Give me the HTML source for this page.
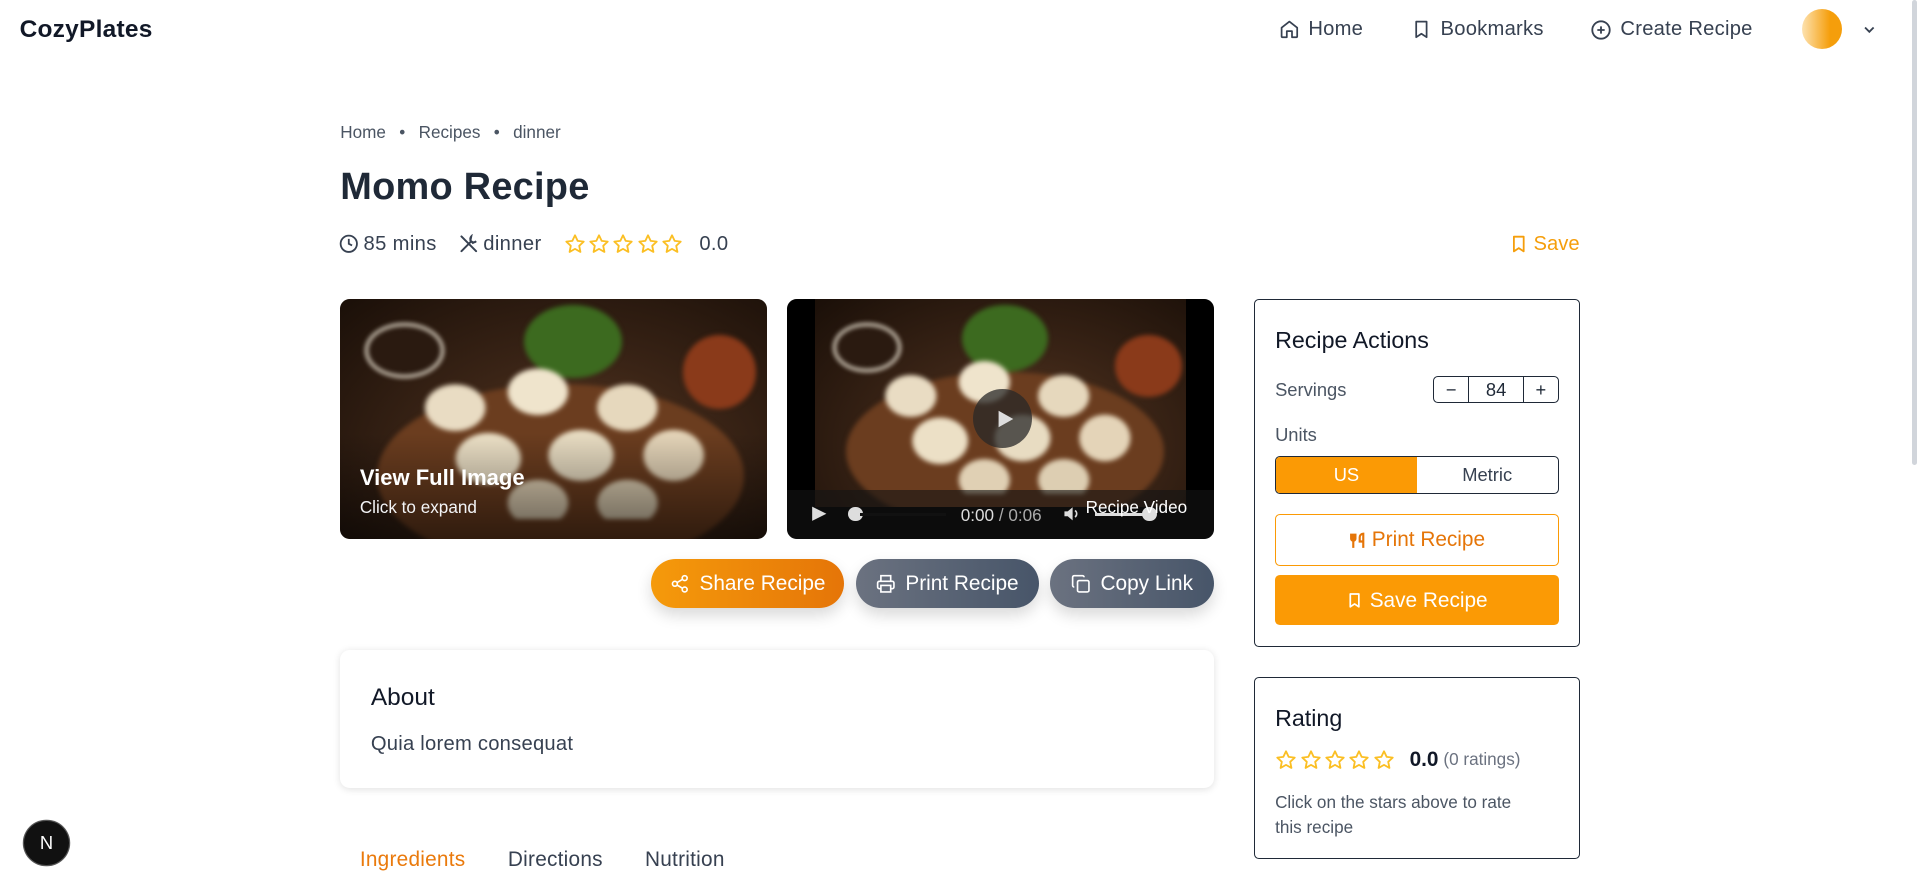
<!DOCTYPE html>
<html><head><meta charset="utf-8"><style>
html,body{margin:0;padding:0;background:#fff;overflow:hidden}
body{width:1919px;height:874px}
#z{zoom:1.2239;width:1568px;height:714px;position:relative;font-family:"Liberation Sans",sans-serif;color:#1f2937}
.a{position:absolute;white-space:nowrap}
svg{display:block}
.nav{font-size:16.5px;color:#374151;display:flex;align-items:center;gap:7px;letter-spacing:.2px}
.btn{position:absolute;top:457px;height:40px;border-radius:20px;color:#fff;font-size:17px;display:flex;align-items:center;justify-content:center;gap:8px;box-shadow:0 6px 12px rgba(0,0,0,.15)}
.card{position:absolute;border:1px solid #1f2937;border-radius:4px;background:#fff}
.star{display:inline-block}
.blur{filter:blur(2px)}
</style></head><body><div id="z">
<div class="a" style="left:16px;top:13px;font-size:20px;font-weight:bold;color:#111827;letter-spacing:.2px">CozyPlates</div>
<div class="a nav" style="left:1045px;top:15px"><svg width="17" height="17" viewBox="0 0 24 24" fill="none" stroke="#374151" stroke-width="2" stroke-linejoin="round"><path d="M3 10l9-7 9 7v10a1 1 0 0 1-1 1h-5v-7h-6v7H4a1 1 0 0 1-1-1z"/></svg>Home</div>
<div class="a nav" style="left:1153px;top:15px"><svg width="17" height="17" viewBox="0 0 24 24" fill="none" stroke="#374151" stroke-width="2" stroke-linejoin="round"><path d="M6 3h12v18l-6-4-6 4z"/></svg>Bookmarks</div>
<div class="a nav" style="left:1299px;top:15px"><svg width="18" height="18" viewBox="0 0 24 24" fill="none" stroke="#374151" stroke-width="2"><circle cx="12" cy="12" r="9.5"/><path d="M12 8v8M8 12h8"/></svg>Create Recipe</div>
<div class="a" style="left:1472px;top:7px;width:33px;height:33px;border-radius:50%;background:linear-gradient(90deg,#fde2b0,#f59e0b 70%)"></div>
<svg class="a" style="left:1521px;top:18px" width="12" height="12" viewBox="0 0 24 24" fill="none" stroke="#374151" stroke-width="3"><path d="M5 9l7 7 7-7"/></svg>
<div class="a" style="left:1562px;top:0;width:4px;height:380px;background:#d1d5db;border-radius:2px"></div>

<div class="a" style="left:278px;top:100px;font-size:14px;color:#4b5563">Home <span style="margin:0 7px">•</span> Recipes <span style="margin:0 7px">•</span> dinner</div>
<div class="a" style="left:278px;top:136px;font-size:31px;font-weight:bold;color:#1f2937;letter-spacing:.2px">Momo Recipe</div>
<div class="a" style="left:277px;top:190px;font-size:16.5px;color:#374151;display:flex;align-items:center;letter-spacing:.3px">
<svg width="16" height="16" viewBox="0 0 24 24" fill="none" stroke="#374151" stroke-width="2.2"><circle cx="12" cy="12" r="10"/><path d="M12 6v6l4 2"/></svg><span style="margin-left:4px">85 mins</span>
<svg style="margin-left:18px" width="16" height="16" viewBox="0 0 24 24" fill="none" stroke="#374151" stroke-width="2.4" stroke-linecap="round"><path d="M3 3l18 18M15 9l-12 12M15 3a4 4 0 0 0 6 6l-4 2-3-3z"/></svg><span style="margin-left:4px">dinner</span>
<span style="margin-left:18px;display:flex;gap:2px" id="st1"></span><span style="margin-left:13px">0.0</span></div>
<div class="a" style="left:1233px;top:190px;font-size:16.5px;color:#f59e0b;display:flex;align-items:center;gap:4px"><svg width="16" height="18" viewBox="0 0 24 24" fill="none" stroke="#f59e0b" stroke-width="2.2" stroke-linejoin="round"><path d="M6 3h12v18l-6-4-6 4z"/></svg>Save</div>

<div class="a" style="left:278px;top:244px;width:349px;height:196px;border-radius:8px;overflow:hidden;background:radial-gradient(ellipse at 55% 70%,#5a3a22 0,#3a2416 45%,#1a0f08 100%)">
<div class="blur">
<div class="a" style="left:30px;top:70px;width:300px;height:150px;border-radius:50%;background:#6b3d1f"></div>
<div class="a" style="left:150px;top:5px;width:80px;height:60px;border-radius:50%;background:#3c6a1f"></div>
<div class="a" style="left:20px;top:20px;width:60px;height:40px;border-radius:50%;background:#2a1a10;border:3px solid #e8e0d0"></div>
<div class="a" style="left:280px;top:30px;width:60px;height:60px;border-radius:50%;background:#8a3a1a"></div>
<div class="a" style="left:40px;top:50px;width:270px;height:130px;background:radial-gradient(ellipse 26px 20px at 20% 30%,#e9dcc3 90%,transparent),radial-gradient(ellipse 26px 20px at 45% 20%,#efe4cc 90%,transparent),radial-gradient(ellipse 26px 20px at 72% 30%,#e6d8bd 90%,transparent),radial-gradient(ellipse 28px 22px at 30% 62%,#ece0c6 90%,transparent),radial-gradient(ellipse 28px 22px at 58% 60%,#e8dcc2 90%,transparent),radial-gradient(ellipse 26px 22px at 86% 60%,#e4d4b8 90%,transparent),radial-gradient(ellipse 26px 20px at 45% 90%,#e0d0b4 90%,transparent),radial-gradient(ellipse 26px 20px at 72% 90%,#ddceb2 90%,transparent)"></div>
</div>
<div class="a" style="left:0;top:110px;width:349px;height:86px;background:linear-gradient(transparent,rgba(0,0,0,.55))"></div>
<div class="a" style="left:16px;top:136px;color:#fff;font-size:18px;font-weight:bold">View Full Image</div>
<div class="a" style="left:16px;top:162px;color:#f3f4f6;font-size:14px">Click to expand</div>
</div>

<div class="a" style="left:643px;top:244px;width:349px;height:196px;border-radius:8px;overflow:hidden;background:#000">
<div class="a" style="left:23px;top:0;width:303px;height:170px;overflow:hidden;background:radial-gradient(ellipse at 55% 70%,#5a3a22 0,#3a2416 45%,#1a0f08 100%)">
<div class="blur">
<div class="a" style="left:25px;top:60px;width:260px;height:130px;border-radius:50%;background:#6b3d1f"></div>
<div class="a" style="left:120px;top:5px;width:70px;height:55px;border-radius:50%;background:#3c6a1f"></div>
<div class="a" style="left:15px;top:20px;width:50px;height:35px;border-radius:50%;background:#2a1a10;border:3px solid #e8e0d0"></div>
<div class="a" style="left:245px;top:30px;width:55px;height:50px;border-radius:50%;background:#8a3a1a"></div>
<div class="a" style="left:30px;top:45px;width:240px;height:115px;background:radial-gradient(ellipse 22px 18px at 20% 30%,#e9dcc3 90%,transparent),radial-gradient(ellipse 22px 18px at 45% 20%,#efe4cc 90%,transparent),radial-gradient(ellipse 22px 18px at 72% 30%,#e6d8bd 90%,transparent),radial-gradient(ellipse 24px 20px at 30% 62%,#ece0c6 90%,transparent),radial-gradient(ellipse 24px 20px at 58% 60%,#e8dcc2 90%,transparent),radial-gradient(ellipse 22px 20px at 86% 60%,#e4d4b8 90%,transparent),radial-gradient(ellipse 22px 18px at 45% 90%,#e0d0b4 90%,transparent),radial-gradient(ellipse 22px 18px at 72% 90%,#ddceb2 90%,transparent)"></div>
</div></div>
<div class="a" style="left:152px;top:74px;width:48px;height:48px;border-radius:50%;background:rgba(40,40,40,.75)"></div>
<svg class="a" style="left:169px;top:89px" width="18" height="18" viewBox="0 0 24 24"><path d="M5 3l16 9-16 9z" fill="#ddd"/></svg>
<div class="a" style="left:0;top:156px;width:349px;height:40px;background:rgba(20,20,20,.6)"></div>
<svg class="a" style="left:19px;top:168px" width="14" height="16" viewBox="0 0 24 24"><path d="M3 2l20 10-20 10z" fill="#ddd"/></svg>
<div class="a" style="left:50px;top:170px;width:12px;height:12px;border-radius:50%;background:#ddd"></div>
<div class="a" style="left:60px;top:175px;width:70px;height:3px;background:#111"></div>
<div class="a" style="left:142px;top:169px;font-size:14px;color:#ddd">0:00 <span style="color:#aaa">/ 0:06</span></div>
<svg class="a" style="left:225px;top:168px" width="16" height="16" viewBox="0 0 24 24"><path d="M3 9h4l6-5v16l-6-5H3z" fill="#ddd"/><path d="M16 8a5 5 0 0 1 0 8" stroke="#ddd" stroke-width="2" fill="none"/></svg>
<div class="a" style="left:252px;top:175px;width:45px;height:3px;background:#ddd"></div>
<div class="a" style="left:290px;top:170px;width:12px;height:12px;border-radius:50%;background:#ddd"></div>
<div class="a" style="left:244px;top:162px;font-size:14px;color:#fff">Recipe Video</div>
</div>

<div class="btn" style="left:532px;width:158px;background:linear-gradient(90deg,#f59a0b,#e57508)"><svg width="16" height="16" viewBox="0 0 24 24" fill="none" stroke="#fff" stroke-width="2"><circle cx="18" cy="5" r="3"/><circle cx="6" cy="12" r="3"/><circle cx="18" cy="19" r="3"/><path d="M8.6 13.5l6.8 4M15.4 6.5l-6.8 4"/></svg>Share Recipe</div>
<div class="btn" style="left:699px;width:150px;background:linear-gradient(90deg,#6b7280,#475569)"><svg width="16" height="16" viewBox="0 0 24 24" fill="none" stroke="#fff" stroke-width="2"><path d="M6 9V2h12v7M6 18H4a2 2 0 0 1-2-2v-5a2 2 0 0 1 2-2h16a2 2 0 0 1 2 2v5a2 2 0 0 1-2 2h-2"/><rect x="6" y="14" width="12" height="8"/></svg>Print Recipe</div>
<div class="btn" style="left:858px;width:134px;background:linear-gradient(90deg,#6b7280,#475569)"><svg width="16" height="16" viewBox="0 0 24 24" fill="none" stroke="#fff" stroke-width="2"><rect x="8" y="8" width="14" height="14" rx="2"/><path d="M4 16a2 2 0 0 1-2-2V4a2 2 0 0 1 2-2h10a2 2 0 0 1 2 2"/></svg>Copy Link</div>

<div class="a" style="left:278px;top:531px;width:714px;height:113px;border-radius:8px;background:#fff;box-shadow:0 1px 6px rgba(0,0,0,.12)">
<div class="a" style="left:25px;top:28px;font-size:20px;color:#111827">About</div>
<div class="a" style="left:25px;top:68px;font-size:16.5px;color:#374151;letter-spacing:.2px">Quia lorem consequat</div>
</div>

<div class="a" style="left:294px;top:693px;font-size:17px;color:#ea7a0c;letter-spacing:.2px">Ingredients</div>
<div class="a" style="left:415px;top:693px;font-size:17px;color:#374151;letter-spacing:.2px">Directions</div>
<div class="a" style="left:527px;top:693px;font-size:17px;color:#374151;letter-spacing:.2px">Nutrition</div>

<div class="card" style="left:1025px;top:244px;width:264px;height:283px">
<div class="a" style="left:16px;top:22px;font-size:19px;color:#111827">Recipe Actions</div>
<div class="a" style="left:16px;top:65px;font-size:15px;color:#4b5563">Servings</div>
<div class="a" style="left:145px;top:62px;width:101px;height:21px;border:1px solid #1f2937;border-radius:4px;font-size:15px;display:flex;box-sizing:content-box">
<div style="width:28px;text-align:center;border-right:1px solid #1f2937;line-height:21px">−</div><div style="width:44px;text-align:center;border-right:1px solid #1f2937;line-height:21px">84</div><div style="flex:1;text-align:center;line-height:21px">+</div></div>
<div class="a" style="left:16px;top:102px;font-size:15px;color:#4b5563">Units</div>
<div class="a" style="left:16px;top:128px;width:230px;height:29px;border:1px solid #1f2937;border-radius:4px;overflow:hidden;display:flex;font-size:15px">
<div style="width:115px;background:#fb9a05;color:#fff;text-align:center;line-height:30px">US</div><div style="flex:1;text-align:center;line-height:30px;color:#374151">Metric</div></div>
<div class="a" style="left:16px;top:175px;width:230px;height:40px;border:1px solid #fb9a05;border-radius:4px;color:#e57508;font-size:17px;display:flex;align-items:center;justify-content:center;gap:5px;padding-top:1px;box-sizing:content-box"><svg width="14" height="16" viewBox="0 0 24 24" fill="none" stroke="#e57508" stroke-width="3"><path d="M3 2v7a3 3 0 0 0 6 0V2M6 2v20M20 15V2a5 5 0 0 0-5 5v6h5v9"/></svg>Print Recipe</div>
<div class="a" style="left:16px;top:225px;width:232px;height:41px;background:#fb9a05;border-radius:4px;color:#fff;font-size:17px;display:flex;align-items:center;justify-content:center;gap:5px;padding-top:1px;box-sizing:border-box"><svg width="14" height="17" viewBox="0 0 24 24" fill="none" stroke="#fff" stroke-width="2.4" stroke-linejoin="round"><path d="M6 3h12v18l-6-4-6 4z"/></svg>Save Recipe</div>
</div>

<div class="card" style="left:1025px;top:553px;width:264px;height:147px">
<div class="a" style="left:16px;top:22px;font-size:19px;color:#111827">Rating</div>
<div class="a" style="left:16px;top:57px;display:flex;align-items:center;font-size:17px"><span style="display:flex;gap:2px" id="st2"></span><span style="margin-left:12px;color:#111827;font-weight:bold">0.0</span><span style="margin-left:4px;font-size:14px;color:#6b7280">(0 ratings)</span></div>
<div class="a" style="left:16px;top:92px;font-size:14px;color:#4b5563;line-height:20px;white-space:normal;width:218px">Click on the stars above to rate this recipe</div>
</div>

<div class="a" style="left:20px;top:671px;width:36px;height:36px;border-radius:50%;background:#111;box-shadow:0 0 0 1px #555;color:#fff;font-size:15px;display:flex;align-items:center;justify-content:center">N</div>
</div>
<script>
var s='<svg class="star" width="18" height="18" viewBox="0 0 24 24" fill="none" stroke="#fbbf24" stroke-width="2" stroke-linejoin="round"><path d="M12 2.5l2.9 6.1 6.6.8-4.9 4.6 1.3 6.6L12 17.3l-5.9 3.3 1.3-6.6-4.9-4.6 6.6-.8z"/></svg>';
document.getElementById('st1').innerHTML=s.repeat(5);document.getElementById('st2').innerHTML=s.repeat(5);
</script>
</body></html>
